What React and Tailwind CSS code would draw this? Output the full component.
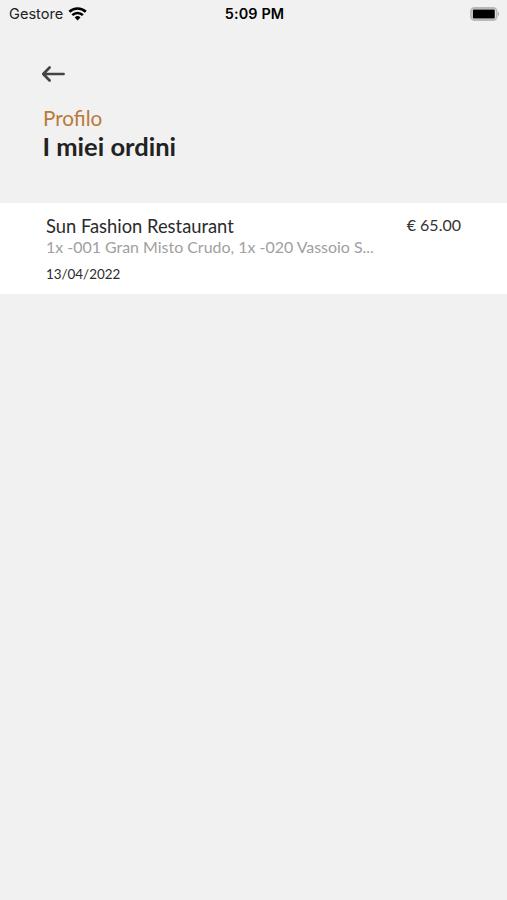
const orders = [
    {
        id: 1,
        restaurant: "Sun Fashion Restaurant",
        items: "1x -001 Gran Misto Crudo, 1x -020 Vassoio S...",
        date: "13/04/2022",
        total: "€ 65.00",
    },
];

const StatusBar = () => {
    return (
        <div className="grid h-[28px] grid-cols-3 items-center pl-[9px] pr-[7px] font-['Inter',sans-serif] text-black">
            <div className="flex items-center gap-[5px]">
                <span className="text-[14.6px] leading-none text-[#222]">Gestore</span>
                <svg width="19" height="14" viewBox="0 0 19 14" fill="none">
                    <path d="M1.4 4.8a11.9 11.9 0 0 1 16.4 0" stroke="#000" strokeWidth="2.7"/>
                    <path d="M4.3 8.1a7.6 7.6 0 0 1 10.6 0" stroke="#000" strokeWidth="2.6"/>
                    <path d="M9.6 13.4 6.7 10.4a4.2 4.2 0 0 1 5.8 0Z" fill="#000"/>
                </svg>
            </div>
            <span className="text-center text-[14.4px] font-semibold leading-none tracking-[0.15px]">5:09 PM</span>
            <svg className="justify-self-end" width="30" height="14" viewBox="0 0 30 14" fill="none">
                <rect x="1" y="1" width="25.6" height="12" rx="3.4" stroke="#b8b8b8" strokeWidth="1.8"/>
                <rect x="2.8" y="2.6" width="22" height="8.8" rx="1.2" fill="#000"/>
                <path d="M27.8 4.8c1.8.6 1.8 3.8 0 4.4Z" fill="#b4b4b4"/>
            </svg>
        </div>
    );
};

const OrderRow = ({order}) => {
    return (
        <div className="flex h-[91px] items-start justify-between bg-white px-[46px] pt-[12px]">
            <div>
                <div className="whitespace-nowrap text-[18.35px] leading-[23px] text-[#2b2b2b]">{order.restaurant}</div>
                <div className="whitespace-nowrap text-[15.95px] leading-[18px] text-[#a0a0a0]">{order.items}</div>
                <div className="mt-[9px] text-[13.4px] leading-[18px] text-[#2b2b2b]">{order.date}</div>
            </div>
            <div className="text-[16px] leading-[19px] text-[#333]">{order.total}</div>
        </div>
    );
};

export default function App() {
    return (
        <div className="min-h-screen bg-[#f1f1f1] font-['Lato',sans-serif]">
            <StatusBar/>
            <header className="flex h-[175px] flex-col items-start pl-[42px] pt-[38px]">
                <button type="button" aria-label="Indietro">
                    <svg width="23" height="16" viewBox="0 0 23 16" fill="none" stroke="#444" strokeWidth="2.6" strokeLinecap="round" strokeLinejoin="round">
                        <path d="M21.6 8H1.4M7.6 1.5 1.2 8l6.4 6.5"/>
                    </svg>
                </button>
                <div className="ml-[1px] mt-[23px] text-[20.7px] leading-[26px] text-[#b87b3a]">Profilo</div>
                <h1 className="ml-[0.5px] text-[25.5px] font-bold leading-[30px] text-[#222]">I miei ordini</h1>
            </header>
            <main>
                {orders.map((order) => (
                    <OrderRow key={order.id} order={order}/>
                ))}
            </main>
        </div>
    );
}
